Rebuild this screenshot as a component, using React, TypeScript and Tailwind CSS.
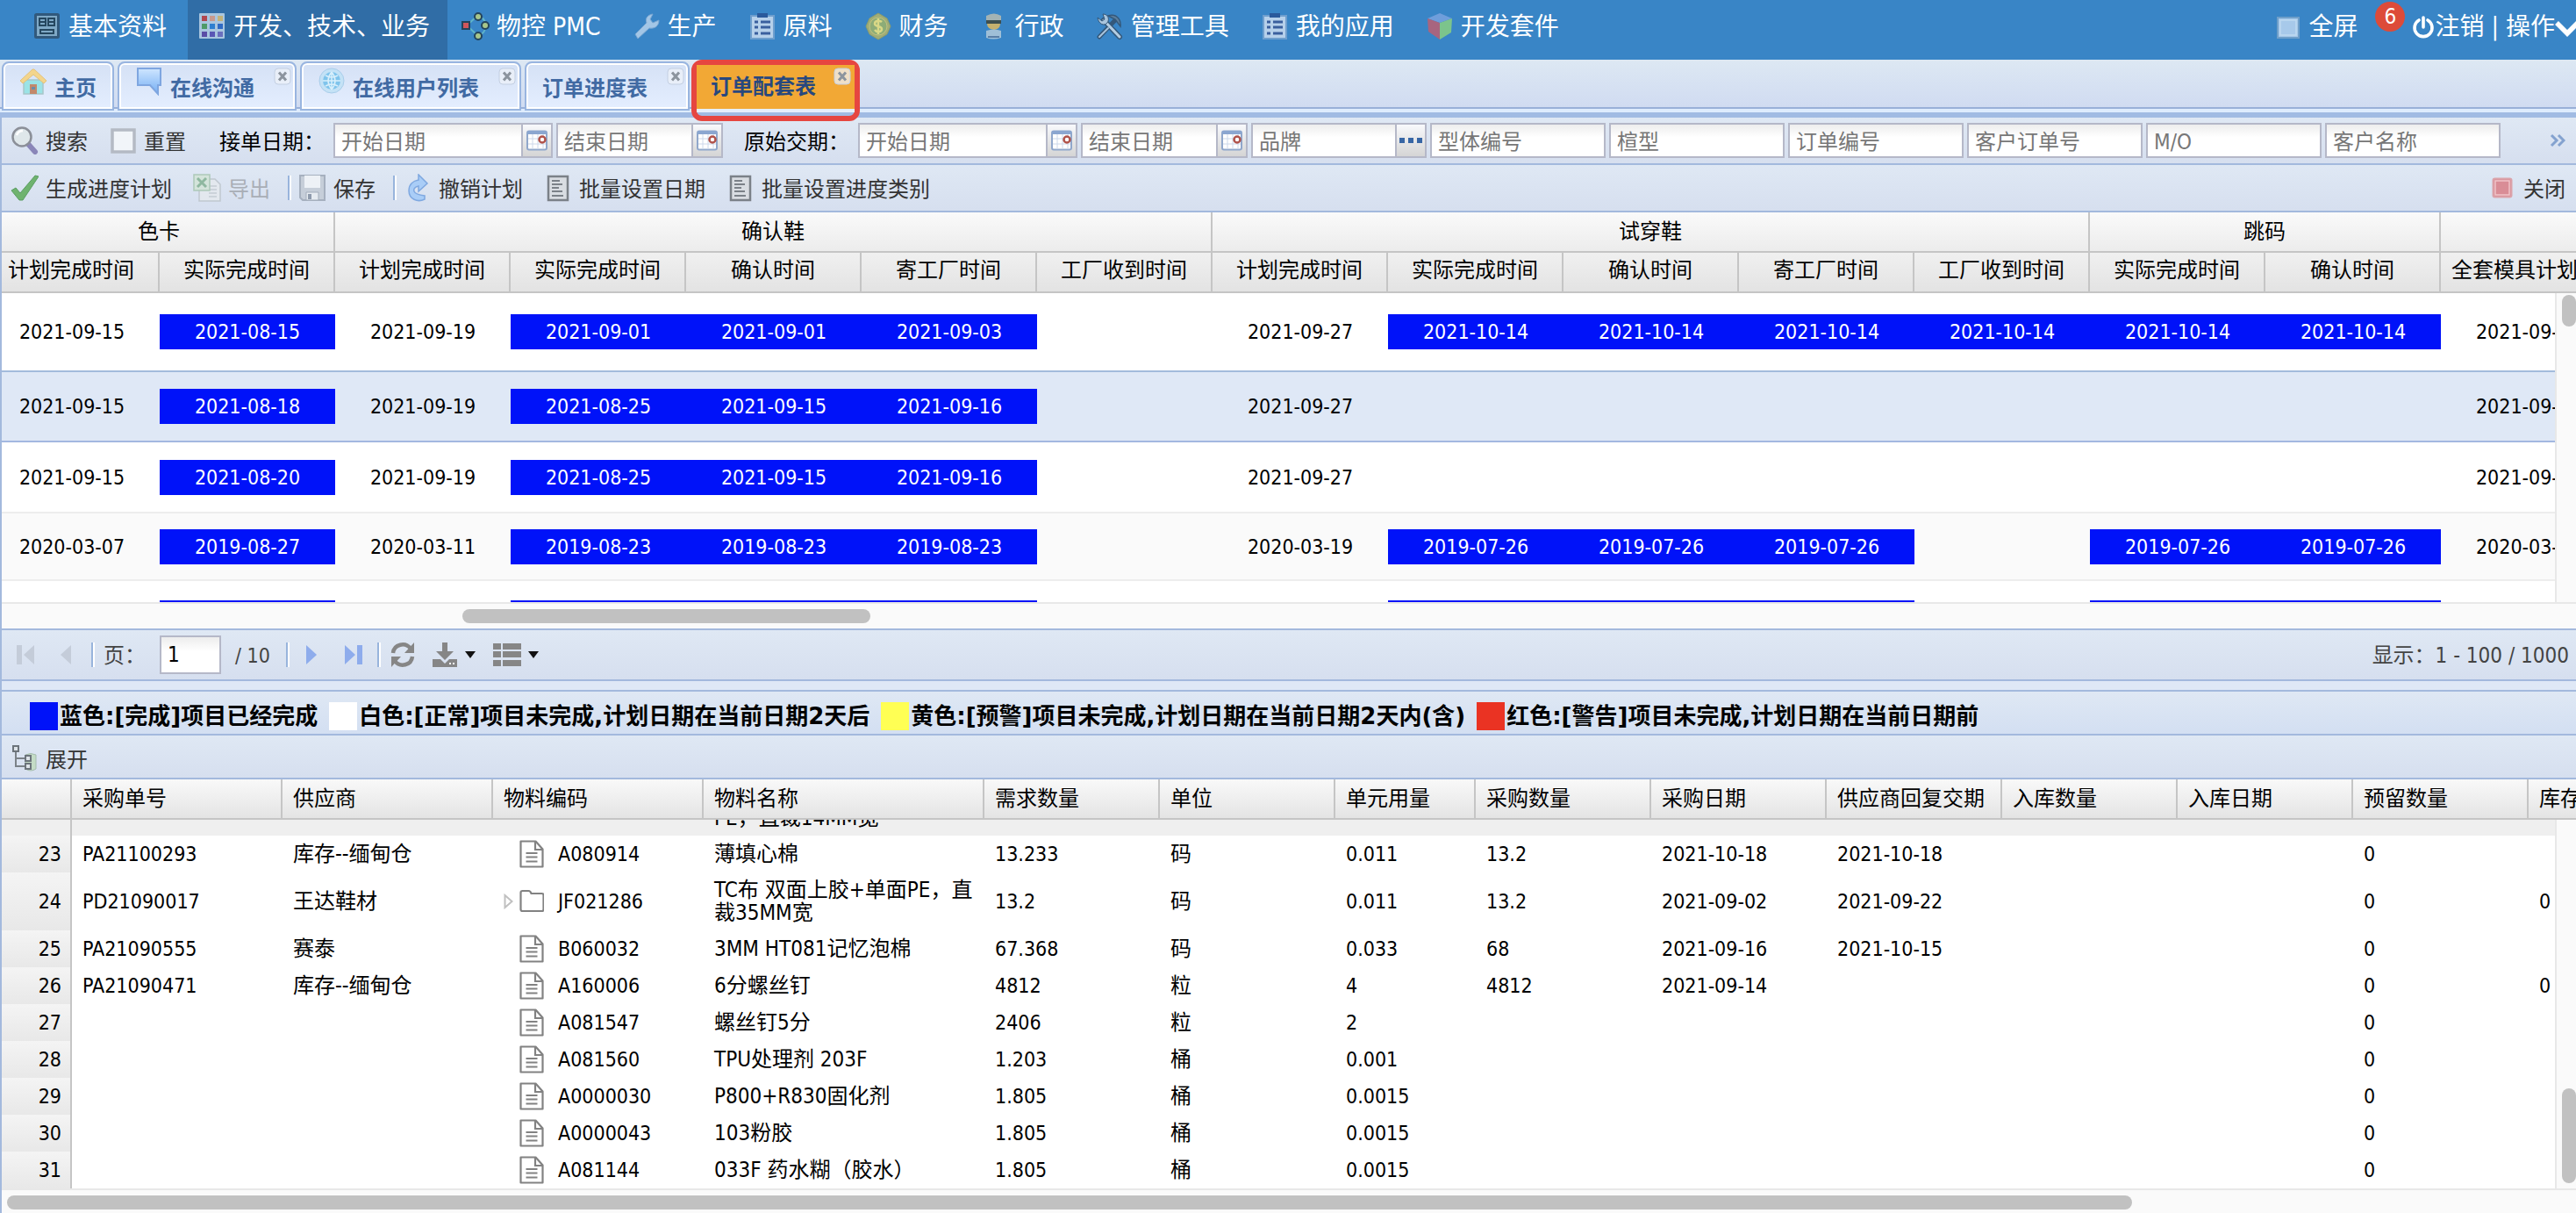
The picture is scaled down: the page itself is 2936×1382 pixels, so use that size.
import type { ReactNode } from "react";

/* ---------- icons ---------- */

function Svg({ className, box = "0 0 32 32", children }: { className: string; box?: string; children: ReactNode }) {
  return (
    <svg className={className} viewBox={box} fill="none" aria-hidden="true">
      {children}
    </svg>
  );
}

const S32 = "h-8 w-8 shrink-0";

const BasicIcon = () => (
  <Svg className={S32}>
    <rect x="2.5" y="2.5" width="26" height="26" rx="1" fill="#7fa9c6" stroke="#31597c" strokeWidth="3" />
    <path d="M7 7h7v8H7zM17 7h7v8h-7zM7 11h7M17 11h7M8 20h15v4H8z" stroke="#25475f" strokeWidth="2" />
  </Svg>
);
const PaletteIcon = () => (
  <Svg className={S32}>
    <rect x="1" y="1" width="29" height="29" rx="1" fill="#a9c6df" />
    <path d="M4 4h6v6H4z" fill="#b0464f" />
    <path d="M13 4h6v6h-6z" fill="#c79a8e" />
    <path d="M22 4h6v6h-6z" fill="#c2b27a" />
    <path d="M4 13h6v6H4z" fill="#4e9a68" />
    <path d="M13 13h6v6h-6z" fill="#2d7fd0" />
    <path d="M22 13h6v6h-6z" fill="#2f6bc4" />
    <path d="M4 22h6v6H4z" fill="#5a4ea6" />
    <path d="M13 22h6v6h-6z" fill="#5957b5" />
    <path d="M22 22h6v6h-6z" fill="#6a6fbd" />
  </Svg>
);
const NodesIcon = () => (
  <Svg className={S32}>
    <path d="M6 15L18 4M6 15l13 12" stroke="#5fb4c9" strokeWidth="2" />
    <path d="M18 4q9 2 10 11-1 9-9 12" stroke="#5fb4c9" strokeWidth="2" />
    <rect x="1" y="11" width="8" height="8" fill="#d0565c" stroke="#23445c" strokeWidth="2" />
    <circle cx="19" cy="5" r="4" fill="#a8c68a" stroke="#23445c" strokeWidth="2" />
    <circle cx="27" cy="15" r="4" fill="#a8c68a" stroke="#23445c" strokeWidth="2" />
    <circle cx="19" cy="27" r="4" fill="#a8c68a" stroke="#23445c" strokeWidth="2" />
  </Svg>
);
const WrenchIcon = () => (
  <Svg className={S32}>
    <path d="M3 25L16 12c-2-5 1-9 7-10l-3 6 3 4 7-3c0 7-5 10-11 9L6 30z" fill="#a3c6e6" stroke="#7aa7d2" />
  </Svg>
);
const ClipboardIcon = () => (
  <Svg className={S32}>
    <path d="M3 4h26v26H3z" fill="#b6d0ea" stroke="#6f9fce" strokeWidth="2" />
    <path d="M10 1h12v5H10z" fill="#2a5a9c" />
    <path d="M7 11h4M7 17h4M7 24h4M14 11h11M14 17h11M14 24h11" stroke="#3a5f9e" strokeWidth="3" />
  </Svg>
);
const MoneyIcon = () => (
  <Svg className={S32}>
    <path d="M16 1l5 3 5 3 4 9-4 9-5 3-5 3-5-3-5-3-4-9 4-9 5-3z" fill="#a0ad77" stroke="#8b9c6c" />
    <circle cx="16" cy="16" r="10" fill="#8dac77" stroke="#c2c27d" />
    <path d="M20 11c-2-2-8-2-8 2s8 2 8 6-6 4-8 1M16 7v18" stroke="#d9d886" strokeWidth="2.5" />
  </Svg>
);
const OfficerIcon = () => (
  <Svg className={S32}>
    <path d="M7 4q9-5 17 0v6H7z" fill="#a3b3b4" />
    <path d="M7 9h17v4H7z" fill="#3d4f50" />
    <path d="M8 13h15q0 6-7 7-8-1-8-7z" fill="#c6b16e" />
    <path d="M7 21q9-3 17 0v8q-9 3-17 0z" fill="#9fbfd7" />
    <path d="M9 28h13" stroke="#5a7fa6" strokeWidth="2" />
  </Svg>
);
const ToolsIcon = () => (
  <Svg className={S32}>
    <path d="M4 28L22 9" stroke="#34587a" strokeWidth="5" strokeLinecap="round" />
    <path d="M14 4c8-3 15 3 14 12l-6-8z" fill="#5c7f9e" stroke="#34587a" strokeWidth="1.5" />
    <path d="M9 9l18 19" stroke="#34587a" strokeWidth="6" strokeLinecap="round" />
    <path d="M9 9l18 19" stroke="#b4cde2" strokeWidth="3" strokeLinecap="round" />
    <path d="M2 6l5 4 3-2-2-6c6 0 8 6 5 10s-10 2-11-6z" fill="#a9c5dd" stroke="#34587a" />
    <path d="M4 28L14 18" stroke="#a9c5dd" strokeWidth="2" strokeLinecap="round" />
  </Svg>
);
const CubeIcon = () => (
  <Svg className={S32}>
    <path d="M16 1l14 6-14 5L2 7z" fill="#6f9edb" />
    <path d="M2 7l14 5v19L3 22z" fill="#a8657f" />
    <path d="M16 12l14-5-1 16-13 8z" fill="#7cc48c" />
  </Svg>
);
const PowerIcon = () => (
  <Svg className="h-[28px] w-[26px] shrink-0" box="0 0 26 28">
    <path d="M8 6a10 10 0 1 0 10 0" stroke="#fff" strokeWidth="3.6" strokeLinecap="round" />
    <path d="M13 3v11" stroke="#fff" strokeWidth="3.6" strokeLinecap="round" />
  </Svg>
);

const HomeIcon = () => (
  <Svg className={S32}>
    <path d="M5 14h22v16H5z" fill="#9be3e6" stroke="#a8c6c9" strokeWidth="1.5" />
    <path d="M1 15L15 2h2l14 13-3 3L16 8 4 18z" fill="#f3d58c" stroke="#e4c27b" />
    <path d="M12 19h8v11h-8z" fill="#c2896c" />
    <path d="M14 22h4v3h-4z" fill="#6c8ca6" />
  </Svg>
);
const ChatIcon = () => (
  <Svg className={S32}>
    <defs>
      <linearGradient id="chat" x1="0" y1="0" x2="0" y2="1">
        <stop stopColor="#cfe6ff" />
        <stop offset="1" stopColor="#74aef4" />
      </linearGradient>
    </defs>
    <path d="M3 1h26v19h-3v10l-9-10H3z" fill="url(#chat)" stroke="#7fa6e0" strokeWidth="2" />
  </Svg>
);
const GlobeIcon = () => (
  <Svg className={S32}>
    <circle cx="16" cy="15" r="14" fill="#c4e2f6" stroke="#a9cdea" />
    <circle cx="16" cy="15" r="10" fill="#7fc4ec" />
    <path d="M6 15h20M16 5v20M9 9q7 4 14 0M9 21q7-4 14 0M16 5q-8 10 0 20M16 5q8 10 0 20" stroke="#d8effb" strokeWidth="1.5" />
  </Svg>
);
const CloseGlyph = () => (
  <Svg className="h-5 w-5" box="0 0 20 20">
    <rect x="1" y="1" width="18" height="18" rx="4" fill="#eef2f8" fillOpacity="0.75" stroke="#c3cfe2" />
    <path d="M6 5.500l8 9M14 5.500l-8 9" stroke="#8c949e" strokeWidth="3" />
  </Svg>
);

const SearchIcon = () => (
  <Svg className={S32}>
    <path d="M20 20l8 9" stroke="#8a86b8" strokeWidth="6" strokeLinecap="round" />
    <circle cx="13" cy="12" r="10.500" fill="#dfe7ea" stroke="#8b8f98" strokeWidth="2.500" />
    <path d="M7 10q2-5 7-5" stroke="#fff" strokeWidth="2.500" />
  </Svg>
);
const ResetIcon = () => (
  <Svg className={S32}>
    <rect x="4" y="4" width="25" height="25" fill="#f1f5f9" stroke="#b4bac4" strokeWidth="3.500" />
  </Svg>
);
const CheckIcon = () => (
  <Svg className={S32}>
    <path d="M1 19l5-3 5 6L28 2l4 1-18 27h-4z" fill="#6fb36f" stroke="#5b9d63" />
  </Svg>
);
const ExcelIcon = () => (
  <Svg className={S32}>
    <path d="M12 6h13l6 6v19H7V6z" fill="#e3e8ee" stroke="#c0c8d0" strokeWidth="1.500" />
    <path d="M18 14h9M18 18h9M18 22h9M18 26h9" stroke="#c5ccd4" strokeWidth="1.500" />
    <rect x="1" y="1" width="18" height="18" fill="#d4e4db" stroke="#adc9b9" strokeWidth="1.500" />
    <path d="M5 5l10 10M15 5L5 15" stroke="#8fb8a0" strokeWidth="3" />
  </Svg>
);
const SaveIcon = () => (
  <Svg className={S32}>
    <path d="M2 2h28v28H5l-3-3z" fill="#c6ced9" stroke="#a6b0bf" strokeWidth="2" />
    <path d="M7 2h18v14H7z" fill="#edf1f6" />
    <path d="M9 21h14v9H9z" fill="#e6ebf1" stroke="#a3adbb" />
    <path d="M11 23h4v6h-4z" fill="#8e9aac" />
  </Svg>
);
const UndoIcon = () => (
  <Svg className={S32}>
    <path d="M24 29c-8 4-18 0-18-10 0-7 5-11 11-12V1l10 10-10 9v-6c-4 1-6 3-5 6 1 3 5 4 12 5z" fill="#a9cdf7" stroke="#7fa8e0" strokeWidth="1.500" />
  </Svg>
);
const ListIcon = () => (
  <Svg className={S32}>
    <rect x="5" y="3" width="22" height="27" fill="#d9dde2" stroke="#7b8188" strokeWidth="2.500" />
    <path d="M9 8h9M9 12h12M9 16h8M9 20h12M9 25h13" stroke="#7b8188" strokeWidth="2" />
  </Svg>
);
const StopIcon = () => (
  <Svg className="h-6 w-6 shrink-0" box="0 0 24 24">
    <rect x="1.500" y="1.500" width="21" height="21" rx="2" fill="#d98d96" stroke="#dba3aa" strokeWidth="2" />
    <rect x="4" y="4" width="16" height="16" stroke="#f0c4c9" strokeWidth="1.500" />
  </Svg>
);
const CalendarIcon = () => (
  <Svg className="h-6 w-[26px]" box="0 0 26 24">
    <rect x="2" y="1.500" width="22" height="21" rx="2" fill="#fff" stroke="#90a7cb" strokeWidth="2" />
    <path d="M2 1h22v4H2z" fill="#8ba6d0" />
    <path d="M3 10h20M3 16h20M8 5v17M14 5v17M20 5v17" stroke="#ccd8ea" />
    <circle cx="19" cy="11" r="3.500" fill="#fff" stroke="#b0524a" strokeWidth="2.500" />
  </Svg>
);
const TreeIcon = () => (
  <Svg className={S32}>
    <path d="M17 12q6-3 12 0v16q-6 4-12 0z" fill="#c4dcc6" stroke="#a5bcae" />
    <path d="M6 6v19h12M6 16h12" stroke="#7b8288" strokeWidth="2" />
    <path d="M3 2h6v6H3zM17 13h6v6h-6zM17 22h6v6h-6z" fill="#dde3e8" stroke="#6c747b" strokeWidth="2" />
  </Svg>
);
const DocIcon = () => (
  <Svg className="h-8 w-7 shrink-0" box="0 0 28 32">
    <path d="M1.500 1.500h17l8 9v20h-25z" fill="#fff" stroke="#828282" strokeWidth="2.200" strokeLinejoin="round" />
    <path d="M18 2v9h8" stroke="#828282" strokeWidth="2.200" />
    <path d="M7.500 15h13M7.500 19.500h13M7.500 24.500h13" stroke="#828282" strokeWidth="2.200" />
  </Svg>
);
const FolderIcon = () => (
  <Svg className="h-8 w-7 shrink-0" box="0 0 28 32">
    <path d="M1.500 6q0-2 2-2h7q2 0 3 3h12q2 0 2 2v16q0 2-2 2h-22q-2 0-2-2z" fill="#fff" stroke="#828282" strokeWidth="2.200" />
  </Svg>
);

/* ---------- data ---------- */

const menu: { label: string; icon: ReactNode; active?: boolean }[] = [
  { label: "基本资料", icon: <BasicIcon /> },
  { label: "开发、技术、业务", icon: <PaletteIcon />, active: true },
  { label: "物控 PMC", icon: <NodesIcon /> },
  { label: "生产", icon: <WrenchIcon /> },
  { label: "原料", icon: <ClipboardIcon /> },
  { label: "财务", icon: <MoneyIcon /> },
  { label: "行政", icon: <OfficerIcon /> },
  { label: "管理工具", icon: <ToolsIcon /> },
  { label: "我的应用", icon: <ClipboardIcon /> },
  { label: "开发套件", icon: <CubeIcon /> },
];

const tabs: { label: string; icon?: ReactNode; closable: boolean }[] = [
  { label: "主页", icon: <HomeIcon />, closable: false },
  { label: "在线沟通", icon: <ChatIcon />, closable: true },
  { label: "在线用户列表", icon: <GlobeIcon />, closable: true },
  { label: "订单进度表", closable: true },
];

const groups = [
  { label: "色卡", span: 2 },
  { label: "确认鞋", span: 5 },
  { label: "试穿鞋", span: 5 },
  { label: "跳码", span: 2 },
  { label: "", span: 1 },
];
const planCols = [
  "计划完成时间", "实际完成时间",
  "计划完成时间", "实际完成时间", "确认时间", "寄工厂时间", "工厂收到时间",
  "计划完成时间", "实际完成时间", "确认时间", "寄工厂时间", "工厂收到时间",
  "实际完成时间", "确认时间", "全套模具计划完成时间",
];
/* Entries that start with "*" are finished and drawn on blue. */
const planRows: { row: string; cell: string; values: string[] }[] = [
  {
    row: "h-[90px] bg-white", cell: "border-[#a3bbdc]",
    values: ["2021-09-15", "*2021-08-15", "2021-09-19", "*2021-09-01", "*2021-09-01", "*2021-09-03", "", "2021-09-27", "*2021-10-14", "*2021-10-14", "*2021-10-14", "*2021-10-14", "*2021-10-14", "*2021-10-14", "2021-09-30"],
  },
  {
    row: "h-[80px] bg-[#dfe8f6]", cell: "border-[#a3b8e0]",
    values: ["2021-09-15", "*2021-08-18", "2021-09-19", "*2021-08-25", "*2021-09-15", "*2021-09-16", "", "2021-09-27", "", "", "", "", "", "", "2021-09-30"],
  },
  {
    row: "h-[81px] bg-white", cell: "border-[#ededed]",
    values: ["2021-09-15", "*2021-08-20", "2021-09-19", "*2021-08-25", "*2021-09-15", "*2021-09-16", "", "2021-09-27", "", "", "", "", "", "", "2021-09-30"],
  },
  {
    row: "h-[77px] bg-[#fafafa]", cell: "border-[#ededed]",
    values: ["2020-03-07", "*2019-08-27", "2020-03-11", "*2019-08-23", "*2019-08-23", "*2019-08-23", "", "2020-03-19", "*2019-07-26", "*2019-07-26", "*2019-07-26", "", "*2019-07-26", "*2019-07-26", "2020-03-22"],
  },
  {
    row: "h-[86px] bg-white", cell: "border-[#ededed]",
    values: ["", "*", "", "*", "*", "*", "", "", "*", "*", "*", "", "*", "*", ""],
  },
];

const itemCols = ["", "采购单号", "供应商", "物料编码", "物料名称", "需求数量", "单位", "单元用量", "采购数量", "采购日期", "供应商回复交期", "入库数量", "入库日期", "预留数量", "库存数量"];
const itemRows: string[][] = [
  ["23", "PA21100293", "库存--缅甸仓", "A080914", "薄填心棉", "13.233", "码", "0.011", "13.2", "2021-10-18", "2021-10-18", "", "", "0", ""],
  ["24", "PD21090017", "王达鞋材", "JF021286", "TC布 双面上胶+单面PE，直裁35MM宽", "13.2", "码", "0.011", "13.2", "2021-09-02", "2021-09-22", "", "", "0", "0"],
  ["25", "PA21090555", "赛泰", "B060032", "3MM HT081记忆泡棉", "67.368", "码", "0.033", "68", "2021-09-16", "2021-10-15", "", "", "0", ""],
  ["26", "PA21090471", "库存--缅甸仓", "A160006", "6分螺丝钉", "4812", "粒", "4", "4812", "2021-09-14", "", "", "", "0", "0"],
  ["27", "", "", "A081547", "螺丝钉5分", "2406", "粒", "2", "", "", "", "", "", "0", ""],
  ["28", "", "", "A081560", "TPU处理剂 203F", "1.203", "桶", "0.001", "", "", "", "", "", "0", ""],
  ["29", "", "", "A0000030", "P800+R830固化剂", "1.805", "桶", "0.0015", "", "", "", "", "", "0", ""],
  ["30", "", "", "A0000043", "103粉胶", "1.805", "桶", "0.0015", "", "", "", "", "", "0", ""],
  ["31", "", "", "A081144", "033F 药水糊（胶水）", "1.805", "桶", "0.0015", "", "", "", "", "", "0", ""],
];

/* ---------- controls ---------- */

const fieldBg = "border-2 border-[#b5b8c8] bg-white bg-linear-to-b from-[#ededed] from-0% to-white to-40%";

function Field({ label, width, trigger }: { label: string; width: string; trigger?: "date" | "more" }) {
  return (
    <div className={`flex h-10 shrink-0 ${fieldBg} ${width}`}>
      <input
        aria-label={label}
        placeholder={label}
        className="min-w-0 flex-1 bg-transparent pl-[7px] pt-1 leading-8 text-black outline-none placeholder:text-[#777]"
      />
      {trigger && (
        <button
          type="button"
          aria-label={trigger === "date" ? `选择${label}` : `选取${label}`}
          className="flex w-[34px] items-center justify-center border-l-2 border-[#b5b8c8] bg-linear-to-b from-[#f8f9fc] to-[#d5d5d5]"
        >
          {trigger === "date" ? (
            <CalendarIcon />
          ) : (
            <span className="flex gap-1">
              <i className="h-[6px] w-[6px] bg-[#3766a5]" />
              <i className="h-[6px] w-[6px] bg-[#3766a5]" />
              <i className="h-[6px] w-[6px] bg-[#3766a5]" />
            </span>
          )}
        </button>
      )}
    </div>
  );
}

function ToolButton({ icon, label, disabled }: { icon: ReactNode; label: string; disabled?: boolean }) {
  return (
    <button type="button" disabled={disabled} className="flex shrink-0 items-center gap-2 text-[#333] disabled:text-[#a9aeb6]">
      {icon}
      <span className="pt-1">{label}</span>
    </button>
  );
}

const Sep = () => <span className="h-7 w-1 shrink-0 border-l-2 border-r-2 border-l-[#98b4dc] border-r-white" />;
const toolbarBg = "bg-linear-to-b from-[#dfe8f4] to-[#d6dfef]";

function Swatch({ color, children }: { color: string; children: ReactNode }) {
  return (
    <span className="flex items-center gap-[2px]">
      <i className={`h-8 w-8 ${color}`} />
      <span>{children}</span>
    </span>
  );
}

/* ---------- page ---------- */

export default function App() {
  return (
    <div className="flex min-h-screen w-full flex-col overflow-hidden whitespace-nowrap bg-[#dfe8f6] font-['DejaVu_Sans_Condensed','Noto_Sans_CJK_SC',sans-serif] text-[24px] leading-8 text-black">
      <header className="flex h-[68px] justify-between bg-[#3985c6] text-[28px] text-white">
        <nav className="flex gap-1 pl-[26px]">
          {menu.map((m) => (
            <a
              key={m.label}
              href="#"
              className={`flex items-center gap-2 pb-2 pl-3 pr-5 ${m.active ? "bg-[#306da6]" : ""}`}
            >
              {m.icon}
              <span className="pt-[2px]">{m.label}</span>
            </a>
          ))}
        </nav>
        <div className="flex items-center pb-[6px]">
          <button className="flex items-center gap-[10px]">
            <Svg className="h-[26px] w-[26px]" box="0 0 26 26">
              <rect x="1" y="2" width="24" height="23" fill="#a7c9ea" stroke="#6f9fc9" strokeWidth="2" />
              <rect x="4" y="5" width="18" height="17" stroke="#bfd9f1" strokeWidth="1.500" />
            </Svg>
            全屏
          </button>
          <span className="mb-6 ml-5 mr-2 flex h-[34px] w-[34px] items-center justify-center rounded-full bg-[#dd4b39] text-[24px]">6</span>
          <button className="flex items-center">
            <PowerIcon />
            注销
          </button>
          <span className="px-2">|</span>
          <button className="flex items-center">
            操作
            <Svg className="h-7 w-6 shrink-0" box="0 0 24 28">
              <path d="M2 9l12 12L26 9" stroke="#fff" strokeWidth="5.500" />
            </Svg>
          </button>
        </div>
      </header>

      <div className="flex h-[66px] flex-col bg-[#a1bbe3]">
        <div className="flex h-[60px] items-start gap-1 bg-linear-to-b from-[#dde8f3] to-[#cfdaf1] pl-[2px] font-bold text-[#416aa3] shadow-[inset_0_-4px_0_#deecfd,inset_0_-6px_0_#99b0d8]">
          {tabs.map((t) => (
            <div
              key={t.label}
              className={`relative mt-[2px] flex h-[56px] items-center rounded-t-lg border-2 border-[#99b5e0] bg-linear-to-b from-[#d5e1f5] to-[#e4eeff] pl-[18px] pt-[2px] shadow-[inset_0_0_0_2px_#fff] ${t.closable ? "pr-[46px]" : "pr-[18px]"}`}
            >
              <button className="flex gap-2">
                {t.icon && <span className="-mt-1">{t.icon}</span>}
                <span className="pt-1">{t.label}</span>
              </button>
              {t.closable && (
                <button aria-label={`关闭${t.label}`} className="absolute right-1 top-[5px]">
                  <CloseGlyph />
                </button>
              )}
            </div>
          ))}
          <div className="relative z-10 -ml-[2px] flex h-[70px] flex-col rounded-xl border-[6px] border-[#e64640] bg-[#a1bbe3]">
            <div className="flex h-[50px] shrink-0 items-center bg-[#f2a835] pl-4 pr-11 text-[#28487e]">
              <button>订单配套表</button>
              <button aria-label="关闭订单配套表" className="absolute right-1 top-[3px]">
                <CloseGlyph />
              </button>
            </div>
            <span className="h-1 bg-[#e6effb]" />
          </div>
        </div>
      </div>

      <main className="flex flex-1 flex-col border-l-2 border-[#a3b9dd]">
        <form className={`flex h-[54px] items-center border-b-2 border-[#a3b9dd] pl-[10px] ${toolbarBg}`}>
          <div className="flex w-[368px] items-center">
            <ToolButton icon={<SearchIcon />} label="搜索" />
            <span className="w-6" />
            <ToolButton icon={<ResetIcon />} label="重置" />
            <span className="pl-[38px] pt-1">接单日期：</span>
          </div>
          <div className="flex flex-1 items-center gap-1">
            <Field label="开始日期" width="w-[250px]" trigger="date" />
            <Field label="结束日期" width="w-[190px]" trigger="date" />
            <span className="w-[146px] pl-5 pt-1">原始交期：</span>
            <Field label="开始日期" width="w-[250px]" trigger="date" />
            <Field label="结束日期" width="w-[190px]" trigger="date" />
            <Field label="品牌" width="w-[200px]" trigger="more" />
            <Field label="型体编号" width="w-[200px]" />
            <Field label="楦型" width="w-[200px]" />
            <Field label="订单编号" width="w-[200px]" />
            <Field label="客户订单号" width="w-[200px]" />
            <Field label="M/O" width="w-[200px]" />
            <Field label="客户名称" width="w-[200px]" />
          </div>
          <button type="button" aria-label="更多" className="pr-3">
            <Svg className="h-4 w-[18px]" box="0 0 18 16">
              <path d="M2 2l6 6-6 6M10 2l6 6-6 6" stroke="#84a2cf" strokeWidth="3" />
            </Svg>
          </button>
        </form>

        <div className={`flex h-[54px] items-center border-b-2 border-[#a3b9dd] pl-[10px] pr-3 ${toolbarBg}`}>
          <ToolButton icon={<CheckIcon />} label="生成进度计划" />
          <span className="w-6" />
          <ToolButton icon={<ExcelIcon />} label="导出" disabled />
          <span className="w-5" />
          <Sep />
          <span className="w-2" />
          <ToolButton icon={<SaveIcon />} label="保存" />
          <span className="w-5" />
          <Sep />
          <span className="w-2" />
          <ToolButton icon={<UndoIcon />} label="撤销计划" />
          <span className="w-6" />
          <ToolButton icon={<ListIcon />} label="批量设置日期" />
          <span className="w-6" />
          <ToolButton icon={<ListIcon />} label="批量设置进度类别" />
          <button className="ml-auto flex items-center gap-3 text-[#333]">
            <StopIcon />
            <span className="pt-1">关闭</span>
          </button>
        </div>

        <section className="relative h-[444px] overflow-hidden bg-white">
          <table className="-ml-5 w-[calc(100%+20px)] min-w-[3000px] table-fixed border-separate border-spacing-0 text-center">
            <colgroup>
              {planCols.map((_, i) => (
                <col key={i} className={i < planCols.length - 1 ? "w-[200px]" : ""} />
              ))}
            </colgroup>
            <thead>
              <tr className="h-[46px]">
                {groups.map((g, i) => (
                  <th key={i} colSpan={g.span} className="border-b-2 border-r-2 border-[#c5c5c5] bg-linear-to-b from-[#fafafa] to-[#ececec] p-0 font-normal">
                    {g.label}
                  </th>
                ))}
              </tr>
              <tr className="h-[46px]">
                {planCols.map((c, i) => (
                  <th key={i} className="border-b-2 border-r-2 border-[#c5c5c5] bg-linear-to-b from-[#f0f0f0] to-[#e3e3e3] p-0 font-normal">
                    <div className="truncate px-3 pb-1">{c}</div>
                  </th>
                ))}
              </tr>
            </thead>
            <tbody className="text-[23px]">
              {planRows.map((r, i) => (
                <tr key={i} className={r.row}>
                  {r.values.map((v, j) => (
                    <td key={j} className={`border-b-2 p-0 ${r.cell}`}>
                      <div className={`h-10 leading-10 ${v.startsWith("*") ? "bg-[#0012f9] text-white" : ""}`}>{v.replace("*", "")}</div>
                    </td>
                  ))}
                </tr>
              ))}
            </tbody>
          </table>
          <div className="absolute bottom-0 right-0 top-[92px] w-6 border-l-2 border-[#e8e8e8] bg-[#fafafa] pl-[6px] pt-[2px]">
            <div className="h-9 w-4 rounded-full bg-[#c1c1c1]" />
          </div>
        </section>
        <div className="h-[30px] border-t-2 border-[#e8e8e8] bg-[#fafafa] pt-[6px]">
          <div className="ml-[525px] h-4 w-[465px] rounded-full bg-[#c1c1c1]" />
        </div>

        <div className={`flex h-[60px] items-center border-y-2 border-[#a3b9dd] pl-4 pr-2 text-[#444] ${toolbarBg}`}>
          <button aria-label="第一页" disabled>
            <Svg className="h-6 w-[22px]" box="0 0 22 24">
              <path d="M1 1h6v22H1zM21 1v22L9 12z" fill="#c4ccd9" />
            </Svg>
          </button>
          <button aria-label="上一页" disabled className="ml-7">
            <Svg className="h-6 w-[14px]" box="0 0 14 24">
              <path d="M13 1v22L1 12z" fill="#c4ccd9" />
            </Svg>
          </button>
          <span className="w-[22px]" />
          <Sep />
          <label htmlFor="page" className="w-[74px] pl-[10px] pt-[2px]">页：</label>
          <input id="page" defaultValue="1" className={`h-11 w-[70px] pl-[7px] text-black ${fieldBg}`} />
          <span className="w-[74px] pl-4 pt-[2px] text-[23px]">/ 10</span>
          <Sep />
          <button aria-label="下一页" className="ml-[18px]">
            <Svg className="h-6 w-[14px]" box="0 0 14 24">
              <path d="M1 1v22l12-11z" fill="#8eacec" />
            </Svg>
          </button>
          <button aria-label="最后一页" className="ml-[30px]">
            <Svg className="h-6 w-[22px]" box="0 0 22 24">
              <path d="M1 1v22l12-11zM15 1h6v22h-6z" fill="#8eacec" />
            </Svg>
          </button>
          <span className="w-4" />
          <Sep />
          <button aria-label="刷新" className="ml-[10px]">
            <Svg className="h-[30px] w-[30px]" box="0 0 30 30">
              <path d="M4 13C5 3 18 0 24 8M26 17C25 27 12 30 6 22" stroke="#868686" strokeWidth="4.500" />
              <path d="M28 1v12H17zM2 29V17h11z" fill="#868686" />
            </Svg>
          </button>
          <button aria-label="下载" className="ml-[18px] flex items-center gap-2">
            <Svg className="h-[30px] w-[30px]" box="0 0 30 30">
              <path d="M12 1h6v10h7L15 21 5 11h7z" fill="#868686" />
              <path d="M1 20h9l5 5 5-5h9v9H1z" fill="#868686" />
              <path d="M20 25h2M24 25h2" stroke="#fff" strokeWidth="2" />
            </Svg>
            <Svg className="h-2 w-3" box="0 0 12 8">
              <path d="M0 0h12L6 8z" fill="#111" />
            </Svg>
          </button>
          <button aria-label="列设置" className="ml-5 flex items-center gap-2">
            <Svg className="h-[28px] w-8" box="0 0 32 28">
              <path d="M0 1h9v7H0zM11 1h21v7H11zM0 10h9v7H0zM11 10h21v7H11zM0 20h9v7H0zM11 20h21v7H11z" fill="#868686" />
            </Svg>
            <Svg className="h-2 w-3" box="0 0 12 8">
              <path d="M0 0h12L6 8z" fill="#111" />
            </Svg>
          </button>
          <span className="ml-auto pt-[2px]">显示：1 - 100 / 1000</span>
        </div>

        <div className="mt-[10px] flex h-[52px] items-center gap-[13px] border-y-2 border-[#a3b9dd] bg-linear-to-b from-[#dfe8f4] to-[#d3dff2] pl-8 pt-2 font-['DejaVu_Sans','Noto_Sans_CJK_SC',sans-serif] text-[26px] font-bold">
          <Swatch color="bg-[#0012f9]">蓝色:[完成]项目已经完成</Swatch>
          <Swatch color="bg-white">白色:[正常]项目未完成,计划日期在当前日期2天后</Swatch>
          <Swatch color="bg-[#ffff54]">黄色:[预警]项目未完成,计划日期在当前日期2天内(含)</Swatch>
          <Swatch color="bg-[#ea3323]">红色:[警告]项目未完成,计划日期在当前日期前</Swatch>
        </div>

        <div className={`flex h-[50px] items-center border-b-2 border-[#a3b9dd] pl-[10px] pt-1 ${toolbarBg}`}>
          <ToolButton icon={<TreeIcon />} label="展开" />
        </div>

        <section className="relative overflow-hidden bg-white">
          <table className="w-full min-w-[3080px] table-fixed border-separate border-spacing-0 text-left">
            <colgroup>
              <col className="w-20" />
              <col className="w-[240px]" />
              <col className="w-[240px]" />
              <col className="w-[240px]" />
              <col className="w-[320px]" />
              <col className="w-[200px]" />
              <col className="w-[200px]" />
              <col className="w-[160px]" />
              <col className="w-[200px]" />
              <col className="w-[200px]" />
              <col className="w-[200px]" />
              <col className="w-[200px]" />
              <col className="w-[200px]" />
              <col className="w-[200px]" />
              <col />
            </colgroup>
            <thead>
              <tr className="h-[46px]">
                {itemCols.map((c, i) => (
                  <th key={i} className="border-b-2 border-r-2 border-[#c5c5c5] bg-linear-to-b from-[#f9f9f9] to-[#e4e4e4] p-0 pl-3 font-normal">
                    {c}
                  </th>
                ))}
              </tr>
            </thead>
            <tbody>
              <tr className="bg-[#efefef]">
                {itemCols.map((_, i) => (
                  <td key={i} className={i === 0 ? "border-r-2 border-[#c5c5c5] p-0" : "p-0 pl-3"}>
                    {i === 4 && (
                      <div className="flex h-[18px] flex-col justify-end overflow-hidden pb-[7px] leading-[26px]">
                        <span>PE，直裁14MM宽</span>
                      </div>
                    )}
                  </td>
                ))}
              </tr>
              {itemRows.map((r) => (
                <tr key={r[0]} className={r[0] === "24" ? "h-[66px]" : "h-[42px]"}>
                  {r.map((v, j) => {
                    if (j === 0)
                      return (
                        <td key={j} className="border-r-2 border-[#c5c5c5] bg-linear-to-b from-[#f4f4f4] to-[#e8e8e8] p-0 pr-[10px] text-right text-[23px]">
                          {v}
                        </td>
                      );
                    if (j === 3)
                      return (
                        <td key={j} className="p-0 text-[23px]">
                          <div className="flex items-center pl-3">
                            <span className="flex w-[18px]">
                              {r[0] === "24" && (
                                <button aria-label={`展开${v}`}>
                                  <Svg className="h-[18px] w-[11px]" box="0 0 11 18">
                                    <path d="M1.500 2v14l8-7z" stroke="#c0c0c0" strokeWidth="2" />
                                  </Svg>
                                </button>
                              )}
                            </span>
                            {r[0] === "24" ? <FolderIcon /> : <DocIcon />}
                            <span className="pl-4">{v}</span>
                          </div>
                        </td>
                      );
                    return (
                      <td key={j} className={`p-0 pl-3 ${j === 4 ? "whitespace-normal pr-3 leading-[26px]" : j === 2 || j === 6 ? "" : "text-[23px]"}`}>
                        {v}
                      </td>
                    );
                  })}
                </tr>
              ))}
            </tbody>
          </table>
          <div className="absolute bottom-0 right-0 top-[46px] flex w-6 flex-col justify-end border-l-2 border-[#e8e8e8] bg-[#fafafa] pb-[6px] pl-[6px]">
            <div className="h-[108px] w-4 rounded-full bg-[#c1c1c1]" />
          </div>
        </section>
        <div className="flex-1 border-t-2 border-[#e8e8e8] bg-[#fafafa] pl-[6px] pt-[6px]">
          <div className="h-4 w-[2422px] max-w-full rounded-full bg-[#c1c1c1]" />
        </div>
      </main>
    </div>
  );
}
